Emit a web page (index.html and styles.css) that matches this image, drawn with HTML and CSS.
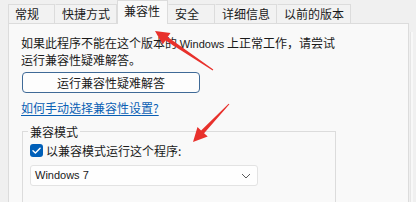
FILE: index.html
```html
<!DOCTYPE html>
<html lang="zh-CN">
<head>
<meta charset="utf-8">
<title>兼容性</title>
<link rel="stylesheet" href="styles.css">
</head>
<body>
<div class="frame">
  <div class="main">
    <div class="tabs">
      <div class="tab">常规</div>
      <div class="tab">快捷方式</div>
      <div class="tab tab-active">兼容性</div>
      <div class="tab">安全</div>
      <div class="tab">详细信息</div>
      <div class="tab">以前的版本</div>
    </div>
    <div class="panel">
      <p class="intro">如果此程序不能在这个版本的 <span class="lat">Windows</span> 上正常工作，请尝试<br>运行兼容性疑难解答。</p>
      <button class="btn" type="button">运行兼容性疑难解答</button>
      <a class="link" href="#">如何手动选择兼容性设置?</a>
      <div class="group">
        <div class="legend">兼容模式</div>
        <label class="check-row">
          <span class="checkbox">
            <svg viewBox="0 0 13 13" width="13" height="13"><path d="M3 6.8 L5.4 9.1 L10.1 4.2" fill="none" stroke="#fff" stroke-width="1.4" stroke-linecap="round" stroke-linejoin="round"/></svg>
          </span>
          <span>以兼容模式运行这个程序:</span>
        </label>
        <div class="select">
          <span class="lat">Windows 7</span>
          <svg class="chev" viewBox="0 0 10 6" width="10" height="6"><path d="M1 1 L5 5 L9 1" fill="none" stroke="#5a5a5a" stroke-width="1"/></svg>
        </div>
      </div>
    </div>
  </div>
  <div class="edge"></div>
</div>
<svg class="arrows" viewBox="0 0 416 202" width="416" height="202">
  <polygon fill="#e8312c" points="155,31 170.5,33 167.7,37.1 213.3,69.6 212.7,70.4 165.5,40.5 162.7,44.6"/>
  <polygon fill="#e8312c" points="193,142 197.5,127 201.1,130.4 228.6,103.7 229.4,104.3 204.1,133.2 207.7,136.6"/>
</svg>
</body>
</html>
```
FILE: styles.css
```css
* { box-sizing: border-box; }
html, body { margin: 0; padding: 0; }
body {
  width: 416px;
  height: 202px;
  overflow: hidden;
  position: relative;
  background: #f0f0f0;
  color: #1a1a1a;
  font-family: "Noto Sans CJK SC", "Noto Sans", sans-serif;
  font-size: 12px;
  line-height: 15px;
}
.lat { font-family: "Liberation Sans", Arial, sans-serif; font-size: 11px; }
.frame { display: flex; height: 202px; }
.main { width: 409px; padding-left: 8px; display: flex; flex-direction: column; }
.edge {
  margin-left: 1px;
  width: 3px;
  border-left: 1px solid #e6e6e6;
  background: #f8f8f8;
  margin-top: 32px;
}
.tabs {
  display: flex;
  align-items: flex-end;
  height: 32px;
  position: relative;
  z-index: 2;
}
.tab {
  height: 19px;
  min-width: 47px;
  padding: 0 6px;
  line-height: 18px;
  border: 1px solid #dcdcdc;
  border-bottom: none;
  border-left-color: transparent;
  background: #f2f2f2;
  white-space: nowrap;
}
.tab:first-child { border-left-color: #dcdcdc; }
.tab-active {
  height: 24px;
  min-width: 51px;
  margin-bottom: -1px;
  padding: 0 6px;
  line-height: 20px;
  background: #f9f9f9;
  border-left-color: #dcdcdc;
}
.tab-active + .tab { border-left-color: transparent; }
.panel {
  flex: 1;
  background: #f9f9f9;
  border: 1px solid #dcdcdc;
  padding: 11px 12px 0 12px;
}
.intro { margin: 0; }
.btn {
  display: block;
  margin: 5px 0 0 1px;
  width: 178px;
  height: 21px;
  padding: 0;
  border: 1px solid #3f6a97;
  border-radius: 4px;
  background: #fdfdfd;
  font: inherit;
  color: #1a1a1a;
  line-height: 18px;
}
.link {
  display: block;
  width: max-content;
  margin-top: 7px;
  color: #0a5fb4;
  text-decoration: underline;
  text-underline-offset: 2px;
}
.group {
  margin-top: 16px;
  margin-left: 1px;
  width: 314px;
  height: 80px;
  border: 1px solid #dcdcdc;
  padding: 0 0 0 7px;
}
.legend {
  width: max-content;
  margin: -8px 0 0 -2px;
  padding: 0 2px;
  background: #f9f9f9;
}
.check-row {
  display: flex;
  align-items: center;
  gap: 3px;
  margin-top: 4px;
  height: 15px;
}
.checkbox {
  width: 13px;
  height: 13px;
  border-radius: 3px;
  background: #005fb8;
  display: flex;
}
.select {
  margin-top: 7px;
  width: 228px;
  height: 21px;
  background: #fefefe;
  border: 1px solid #e3e3e3;
  border-radius: 3px;
  padding: 0 6px 0 4px;
  display: flex;
  align-items: center;
  justify-content: space-between;
  color: #1a1a1a;
}
.chev { margin-right: 0; }
.arrows {
  position: absolute;
  left: 0;
  top: 0;
  pointer-events: none;
  z-index: 5;
}
```
